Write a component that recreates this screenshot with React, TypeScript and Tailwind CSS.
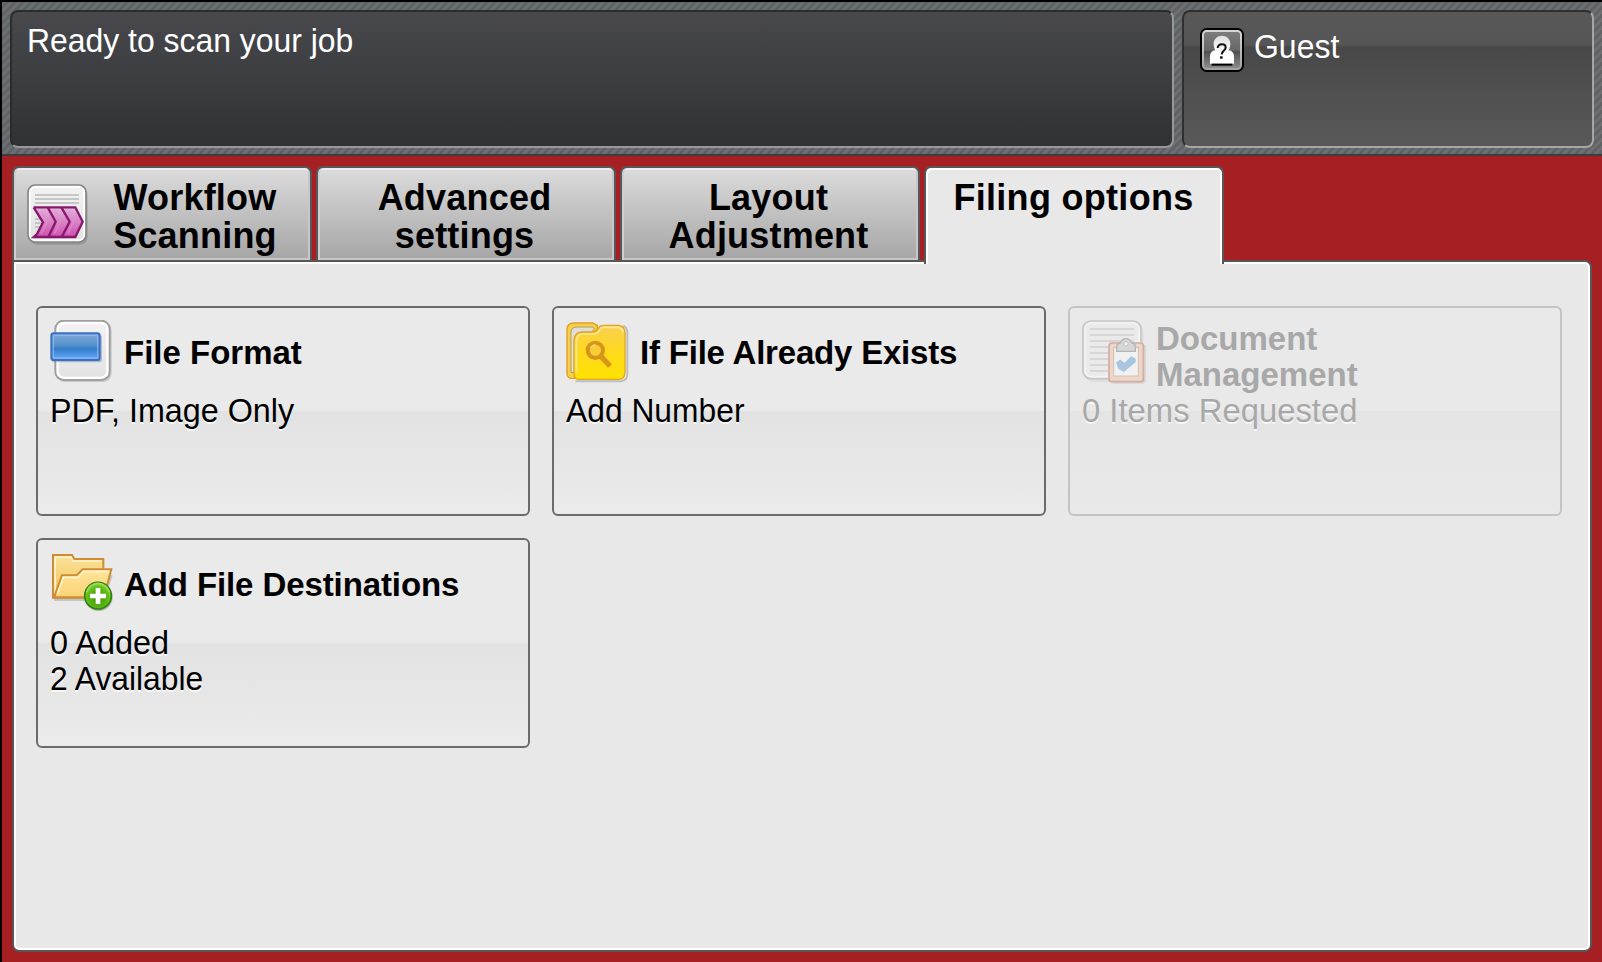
import type { ReactNode } from "react";

function WorkflowIcon() {
  return (
    <svg className="h-16 w-16 shrink-0" viewBox="12 21 192 192">
      <defs>
        <linearGradient id="wfPage" x1="0" y1="0" x2="0" y2="1">
          <stop offset="0" stopColor="#f2f2f2" />
          <stop offset="1" stopColor="#e2e2e2" />
        </linearGradient>
        <linearGradient id="wfArrow" x1="0" y1="0" x2="0" y2="1">
          <stop offset="0" stopColor="#e3b3dc" />
          <stop offset="1" stopColor="#cf50ad" />
        </linearGradient>
      </defs>
      <rect x="24" y="35" width="176" height="174" rx="24" fill="#000" opacity="0.14" />
      <rect x="21" y="30" width="174" height="171" rx="22" fill="#fff" stroke="#858585" strokeWidth="5" />
      <rect x="29" y="38" width="158" height="155" rx="14" fill="url(#wfPage)" />
      <path d="M42 60H174M42 72H174M42 84H174M42 132H60M42 144H60M42 156H60" stroke="#b9b9b9" strokeWidth="5" />
      <path d="M38 97H163L185 140L163 186H38L48 177L66 142L38 97Z" fill="url(#wfArrow)" />
      <path d="M62 108L78 140L60 176M102 108L118 140L100 176M142 108L158 140L140 176" stroke="#e08fd0" strokeWidth="7" fill="none" opacity="0.5" />
      <path
        d="M38 97H163L185 140L163 186H38L48 177L66 142L38 97M80 97L104 140L82 186M121 97L146 140L122 186"
        fill="none"
        stroke="#86186e"
        strokeWidth="7"
      />
    </svg>
  );
}

function GuestIcon() {
  return (
    <svg className="h-11 w-11 shrink-0" viewBox="30 39 132 132">
      <defs>
        <linearGradient id="guestBg" x1="0" y1="0" x2="0" y2="1">
          <stop offset="0" stopColor="#7c7c7c" />
          <stop offset="0.5" stopColor="#686868" />
          <stop offset="0.55" stopColor="#4f4f4f" />
          <stop offset="1" stopColor="#8c8c8c" />
        </linearGradient>
        <linearGradient id="guestRim" x1="0" y1="0" x2="0" y2="1">
          <stop offset="0" stopColor="#d9d9d9" />
          <stop offset="1" stopColor="#a0a0a0" />
        </linearGradient>
        <linearGradient id="guestMan" x1="0" y1="0" x2="0" y2="1">
          <stop offset="0" stopColor="#dedede" />
          <stop offset="0.6" stopColor="#fff" />
        </linearGradient>
      </defs>
      <rect x="33" y="42" width="126" height="126" rx="17" fill="url(#guestRim)" stroke="#000" strokeWidth="6" />
      <rect x="42" y="51" width="108" height="108" rx="8" fill="url(#guestBg)" />
      <path
        d="M96 62C110 62 121 72 121 86C121 94 119 100 116 106C126 107 132 114 132 124V146H60V124C60 114 66 107 76 106C73 100 71 94 71 86C71 72 82 62 96 62Z"
        fill="url(#guestMan)"
      />
      <path d="M65 149H127" stroke="#000" strokeWidth="6" />
      <path d="M83 99C84 90 90 88 96 88C103 88 107 92 107 98C107 106 96 107 95 118" fill="none" stroke="#111" strokeWidth="6" />
      <rect x="90" y="124" width="8" height="7" fill="#111" />
    </svg>
  );
}

function FileFormatIcon() {
  return (
    <svg className="h-16 w-16 shrink-0" viewBox="30 30 192 192">
      <defs>
        <linearGradient id="ffPage" x1="0" y1="0" x2="0" y2="1">
          <stop offset="0" stopColor="#f2f2f2" />
          <stop offset="1" stopColor="#e3e3e3" />
        </linearGradient>
        <linearGradient id="ffBlue" x1="0" y1="0" x2="0" y2="1">
          <stop offset="0" stopColor="#80abd8" />
          <stop offset="0.45" stopColor="#5490ce" />
          <stop offset="0.58" stopColor="#357dc8" />
          <stop offset="1" stopColor="#66a8ff" />
        </linearGradient>
      </defs>
      <rect x="49" y="36" width="166" height="180" rx="26" fill="#000" opacity="0.14" />
      <rect x="46" y="32" width="163" height="178" rx="25" fill="#fff" stroke="#a0a0a0" strokeWidth="6" />
      <rect x="56" y="42" width="143" height="158" rx="17" fill="url(#ffPage)" />
      <rect x="36" y="74" width="150" height="83" rx="8" fill="#33548a" opacity="0.3" />
      <rect x="34" y="70" width="145" height="80" rx="7" fill="url(#ffBlue)" stroke="#3c70bd" strokeWidth="6" />
      <rect x="40" y="76" width="133" height="68" rx="3" fill="none" stroke="#8dbcf2" strokeWidth="4" opacity="0.75" />
    </svg>
  );
}

function FolderSearchIcon() {
  return (
    <svg className="h-16 w-16 shrink-0" viewBox="30 30 192 192">
      <defs>
        <linearGradient id="fsFront" x1="0" y1="0" x2="0" y2="1">
          <stop offset="0" stopColor="#f9cf52" />
          <stop offset="0.5" stopColor="#ffd91d" />
          <stop offset="1" stopColor="#ffe100" />
        </linearGradient>
      </defs>
      <path d="M58 214H194Q214 212 214 192V66Q213 52 202 47" fill="none" stroke="#777" strokeWidth="6" opacity="0.38" />
      <path d="M33 192V57Q34 39 54 39H110L124 46V80L56 205H44Q34 203 33 192Z" fill="#f7cf4a" stroke="#dea023" strokeWidth="4" />
      <path d="M45 187V66Q46 52 62 51H110L116 58L104 67H78Q56 70 55 92V188Z" fill="#dedede" stroke="#b99a50" strokeWidth="3" />
      <path
        d="M54 190V92Q55 67 78 66H112Q123 65 127 55Q131 46 142 46H188Q206 48 207 67V188Q206 207 188 208H66Q54 207 54 190Z"
        fill="url(#fsFront)"
        stroke="#e0a622"
        strokeWidth="4"
      />
      <path d="M61 188V94Q62 73 80 72H114Q127 70 132 58Q135 52 144 52H186Q200 54 201 68" fill="none" stroke="#ffe892" strokeWidth="5" />
      <circle cx="118" cy="121" r="23" fill="#f9cd34" stroke="#d8951b" strokeWidth="12" />
      <path d="M104 114Q108 106 119 105" fill="none" stroke="#f8dc7d" strokeWidth="4" />
      <path d="M134 138L162 168" stroke="#d8951b" strokeWidth="16" />
    </svg>
  );
}

function DocumentManagementIcon() {
  return (
    <svg className="h-16 w-16 shrink-0" viewBox="36 30 192 192">
      <rect x="44" y="38" width="176" height="178" rx="26" fill="#000" opacity="0.05" />
      <rect x="39" y="33" width="174" height="173" rx="24" fill="#eaeaea" stroke="#c6c6c6" strokeWidth="5" />
      <rect x="45" y="39" width="162" height="161" rx="19" fill="none" stroke="#f3f3f3" strokeWidth="5" />
      <path d="M60 57H192M60 75H192M60 93H192M60 111H192M60 129H192M60 147H192M60 165H192M60 183H192" stroke="#d0d0d0" strokeWidth="5" />
      <rect x="120" y="103" width="108" height="118" rx="10" fill="#000" opacity="0.08" />
      <rect x="117" y="99" width="103" height="116" rx="9" fill="#ecd6c9" stroke="#d5ada0" strokeWidth="5" />
      <rect x="131" y="112" width="74" height="86" fill="#f1f1f1" stroke="#d4bfb6" strokeWidth="3" />
      <path d="M140 124V108Q141 100 151 99Q156 86 168 86Q180 86 185 99Q195 100 196 108V124Z" fill="#d6d6d6" stroke="#b5b5b5" strokeWidth="4" />
      <circle cx="168" cy="101" r="6" fill="#f3f3f3" stroke="#b5b5b5" strokeWidth="2" />
      <path d="M138 157L151 149L164 158L184 138L197 146V156L162 186L145 177Z" fill="#a9c5e0" />
    </svg>
  );
}

function AddFolderIcon() {
  return (
    <svg className="h-16 w-16 shrink-0" viewBox="30 21 192 192">
      <defs>
        <linearGradient id="afBack" x1="0" y1="0" x2="0" y2="1">
          <stop offset="0" stopColor="#fbe39b" />
          <stop offset="1" stopColor="#efc158" />
        </linearGradient>
        <linearGradient id="afFront" x1="0" y1="0" x2="0" y2="1">
          <stop offset="0" stopColor="#ffe49a" />
          <stop offset="1" stopColor="#fbd474" />
        </linearGradient>
        <radialGradient id="afGreen" cx="0.5" cy="0.6" r="0.6">
          <stop offset="0" stopColor="#3f9d0c" />
          <stop offset="0.5" stopColor="#55b010" />
          <stop offset="1" stopColor="#8ad82c" />
        </radialGradient>
      </defs>
      <path d="M42 164H190L214 90" fill="none" stroke="#555" strokeWidth="8" opacity="0.25" />
      <path d="M39 158V30H96L103 42H190V158Z" fill="url(#afBack)" stroke="#cf8c35" strokeWidth="6" />
      <path d="M45 150V36H92L99 48H184" fill="none" stroke="#fff3cb" strokeWidth="5" />
      <path d="M42 157L66 91H110L128 73H214L192 157Z" fill="url(#afFront)" stroke="#cf8c35" strokeWidth="6" />
      <path d="M52 146L70 97H114L131 79H206" fill="none" stroke="#fff3cb" strokeWidth="5" />
      <circle cx="176" cy="156" r="42" fill="#444" opacity="0.35" />
      <circle cx="174" cy="152" r="40" fill="url(#afGreen)" stroke="#2d8413" strokeWidth="5" />
      <path d="M140 142A35 35 0 0 1 208 142" fill="none" stroke="#a4da62" strokeWidth="5" />
      <path d="M174 129V177M150 153H198" stroke="#fff" strokeWidth="14" />
    </svg>
  );
}

function Tab({ children, active, icon }: { children: ReactNode; active?: boolean; icon?: ReactNode }) {
  return (
    <button
      className={
        active
          ? "z-10 -mb-1 flex h-[98px] w-[300px] items-start justify-center rounded-t-[7px] border-2 border-b-0 border-[#575555] bg-[#e8e8e8] pt-[11px] pr-px text-[36px] leading-[38px] font-bold tracking-[0.3px] shadow-[inset_2px_2px_0_#fff,inset_-2px_0_0_#fff]"
          : "flex h-[94px] w-[300px] items-start justify-center rounded-t-[7px] border-2 border-b-0 border-[#575555] bg-linear-to-b from-[#dcdcdc] to-[#a6a6a6] pt-[11px] pr-[3px] text-[36px] leading-[38px] font-bold tracking-[0.2px] shadow-[inset_2px_0_0_#d0d0d0,inset_-2px_-2px_0_#c8c8c8,inset_0_2px_0_#ececec]"
      }
    >
      {icon && <span className="mt-[3px] mr-[12px] -ml-[5px]">{icon}</span>}
      <span className={icon ? "w-[190px] pr-[2px]" : ""}>{children}</span>
    </button>
  );
}

function Card({ icon, title, twoLine, disabled, children }: { icon: ReactNode; title: ReactNode; twoLine?: boolean; disabled?: boolean; children: ReactNode }) {
  return (
    <button
      className={
        disabled
          ? "flex h-[210px] w-[494px] flex-col items-start rounded-[6px] border-2 border-[#c4c4c4] bg-[linear-gradient(#e9e9e9_0%,#e9e9e9_50%,#e4e4e4_50%,#e9e9e9_100%)] p-3 text-left text-[#a8a8a8]"
          : "flex h-[210px] w-[494px] flex-col items-start rounded-[6px] border-2 border-[#6b6b6b] bg-[linear-gradient(#eaeaea_0%,#eaeaea_50%,#e2e2e2_50%,#ebebeb_100%)] p-3 text-left text-black"
      }
    >
      <div className="flex h-[72px] gap-[10px]">
        {icon}
        <div className={twoLine ? "pt-px text-[33px] leading-[36px] font-bold" : "pt-[15px] text-[33px] leading-[36px] font-bold"}>{title}</div>
      </div>
      <div className="flex flex-col items-start text-[34px] leading-[36px] whitespace-nowrap [text-shadow:0_2px_0_rgba(255,255,255,0.7)]">{children}</div>
    </button>
  );
}

export default function App() {
  return (
    <div className="flex h-[962px] w-[1602px] flex-col overflow-hidden border-t-2 border-l-2 border-black bg-[#a51f23] font-['Liberation_Sans',Arial,sans-serif] antialiased">
      <header className="flex h-[154px] shrink-0 gap-2 border-b-2 border-[#3a3c3f] bg-[#626467] bg-[repeating-linear-gradient(135deg,#6d7072_0px,#6d7072_2px,#606365_2.8px,#606365_4.9px,#6d7072_5.657px)] px-2 pt-2">
        <div className="h-[138px] w-[1164px] rounded-[8px] border-2 border-t-[#2b2c2e] border-r-[#97989b] border-b-[#97989b] border-l-[#2b2c2e] bg-linear-to-b from-[#48484d] to-[#2f3335] pt-2 pl-[15px] text-[34px] leading-[40px] text-white">
          <span className="inline-block origin-left scale-x-[0.938]">Ready to scan your job</span>
        </div>
        <div className="flex h-[138px] w-[412px] items-start gap-[10px] rounded-[8px] border-2 border-t-[#2f2f2f] border-r-[#a6a6a6] border-b-[#a6a6a6] border-l-[#2f2f2f] bg-[linear-gradient(#575757_0px,#565656_33px,#484848_35px,#595959_100%)] pl-4 text-[34px] leading-[40px] text-white">
          <div className="pt-4">
            <GuestIcon />
          </div>
          <div className="origin-left scale-x-[0.94] pt-[14px]">Guest</div>
        </div>
      </header>
      <main className="flex flex-col pt-[10px] pl-[10px]">
        <nav className="flex items-start gap-1">
          <Tab icon={<WorkflowIcon />}>
            Workflow
            <br />
            Scanning
          </Tab>
          <Tab>
            Advanced
            <br />
            settings
          </Tab>
          <Tab>
            Layout
            <br />
            Adjustment
          </Tab>
          <Tab active>Filing options</Tab>
        </nav>
        <section className="h-[692px] w-[1580px] rounded-[7px] rounded-tl-none border-2 border-[#575555] bg-[#e8e8e8] pt-[44px] pl-[22px] shadow-[inset_0_0_0_2px_#fff]">
          <div className="grid grid-cols-[494px_494px_494px] gap-[22px]">
            <Card icon={<FileFormatIcon />} title="File Format">
              <span className="origin-left scale-x-[0.95]">PDF, Image Only</span>
            </Card>
            <Card icon={<FolderSearchIcon />} title={<span className="tracking-[-0.2px]">If File Already Exists</span>}>
              <span className="origin-left scale-x-[0.935]">Add Number</span>
            </Card>
            <Card
              icon={<DocumentManagementIcon />}
              twoLine
              disabled
              title={
                <>
                  Document
                  <br />
                  Management
                </>
              }
            >
              <span className="origin-left scale-x-[0.965]">0 Items Requested</span>
            </Card>
            <Card icon={<AddFolderIcon />} title={<span className="tracking-[-0.1px]">Add File Destinations</span>}>
              <span className="origin-left scale-x-[0.955]">0 Added</span>
              <span className="origin-left scale-x-[0.935]">2 Available</span>
            </Card>
          </div>
        </section>
      </main>
    </div>
  );
}
